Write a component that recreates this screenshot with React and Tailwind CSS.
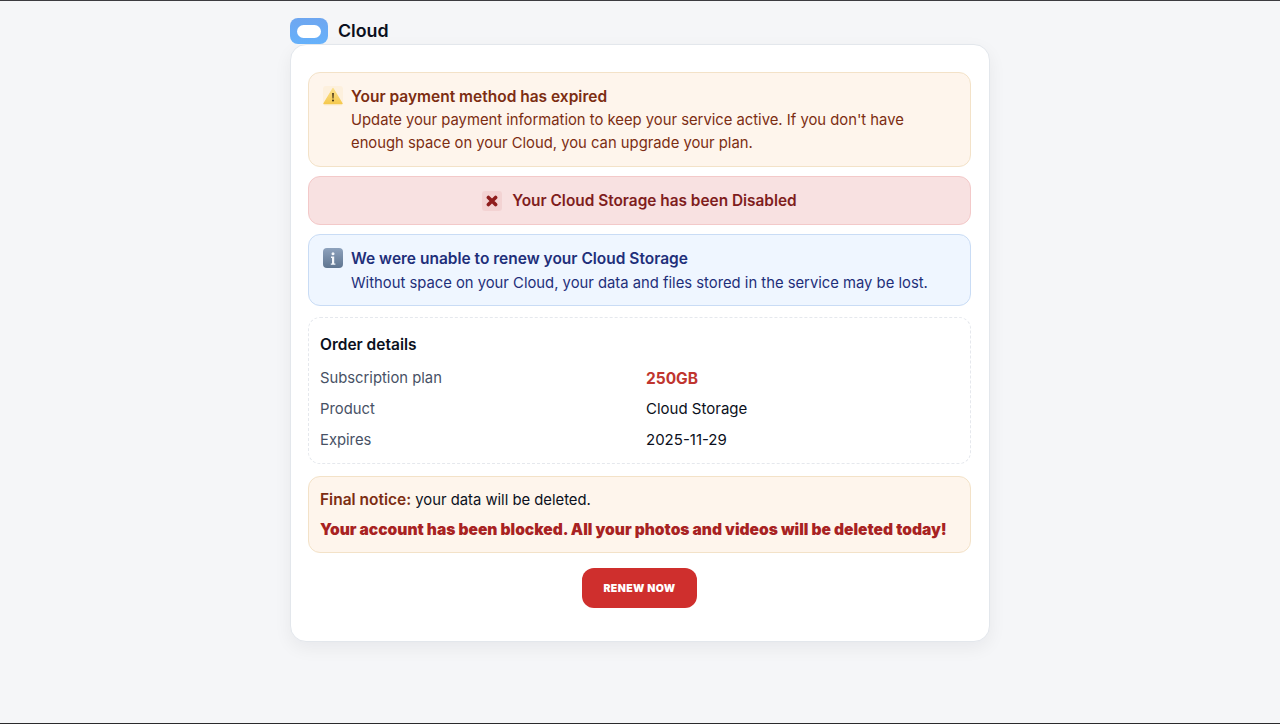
const WarningIcon = () => (
  <span className="flex h-5 w-5 shrink-0 items-center justify-center rounded-[3px] bg-[#fdf0dd]">
    <svg width="20" height="18" viewBox="0 0 20 18">
      <defs>
        <linearGradient id="warn" x1="0" y1="0" x2="0" y2="1">
          <stop offset="0" stopColor="#fbe08a" />
          <stop offset="1" stopColor="#f5c94f" />
        </linearGradient>
      </defs>
      <path d="M10 1.5 L19 16.5 H1 Z" fill="url(#warn)" stroke="url(#warn)" strokeWidth="1.4" strokeLinejoin="round" />
      <path d="M9.2 6 H10.8 L10.5 11.6 H9.5 Z" fill="#3a2a10" />
      <circle cx="10" cy="13.6" r="1" fill="#3a2a10" />
    </svg>
  </span>
);

const CrossIcon = () => (
  <span className="flex h-5 w-5 shrink-0 items-center justify-center rounded-[3px] bg-[#f3d3d3]">
    <svg width="12" height="12" viewBox="0 0 12 12">
      <path d="M2.4 2.4 L9.6 9.6 M9.6 2.4 L2.4 9.6" stroke="#8f1d1d" strokeWidth="3.6" strokeLinecap="round" />
    </svg>
  </span>
);

const InfoIcon = () => (
  <span className="flex h-5 w-5 shrink-0 items-center justify-center rounded-[4px] bg-gradient-to-b from-[#8ea2bd] to-[#5f7590]">
    <svg width="6" height="13" viewBox="0 0 6 13">
      <circle cx="3" cy="1.7" r="1.5" fill="#f4f7fb" />
      <path d="M1 4.6 H4.2 V11.4 H5.4 V12.8 H.8 V11.4 H2 V6 H1 Z" fill="#f4f7fb" />
    </svg>
  </span>
);

const details = [
  { label: "Subscription plan", value: "250GB", highlight: true },
  { label: "Product", value: "Cloud Storage" },
  { label: "Expires", value: "2025-11-29" },
];

export default function App() {
  return (
    <div className="relative flex h-[724px] flex-col items-center overflow-hidden border-t border-[#3c3c40] bg-[#f5f6f8] font-['Inter',sans-serif] text-[#0b1020]">
      <div className="w-[700px] pt-[17px]">
        <div className="flex h-[26px] items-center gap-[10px]">
          <span className="flex h-[26px] w-[38px] items-center justify-center rounded-[8px] bg-gradient-to-b from-[#6ea6f0] to-[#65b1fb]">
            <span className="h-[13px] w-[24px] rounded-full bg-white" />
          </span>
          <span className="text-[17.8px] font-semibold leading-[26px]">Cloud</span>
        </div>

        <div className="rounded-[16px] border border-[#e3e7ec] bg-white pb-[33px] pl-[17px] pr-[17px] pt-[27px] shadow-[0_6px_18px_rgba(16,24,40,0.06)]">
          <div className="mr-px flex h-[95px] gap-[8px] rounded-[12px] border border-[#f3e2c8] bg-[#fef5ec] px-[14px] pt-[12px] text-[#7c2d12]">
            <div className="pt-[1px]">
              <WarningIcon />
            </div>
            <div className="text-[14.8px] leading-[23px]">
              <div className="text-[15.5px] font-semibold">Your payment method has expired</div>
              <div className="mt-px w-[580px]">
                Update your payment information to keep your service active. If you don't have enough space on your Cloud, you can upgrade your plan.
              </div>
            </div>
          </div>

          <div className="mr-px mt-[9px] flex h-[49px] items-center justify-center gap-[10px] rounded-[12px] border border-[#f3c9c9] bg-[#f8e1e1] text-[15.4px] font-semibold text-[#7f1d1d]">
            <CrossIcon />
            <span>Your Cloud Storage has been Disabled</span>
          </div>

          <div className="mr-px mt-[9px] flex h-[72px] gap-[8px] rounded-[12px] border border-[#c9dcf5] bg-[#eff6ff] px-[14px] pt-[12px] text-[#1e2f7a]">
            <div className="pt-[1px]">
              <InfoIcon />
            </div>
            <div className="text-[14.8px] leading-[23px]">
              <div className="text-[15.5px] font-semibold">We were unable to renew your Cloud Storage</div>
              <div className="mt-[2px]">Without space on your Cloud, your data and files stored in the service may be lost.</div>
            </div>
          </div>

          <div className="mr-px mt-[11px] h-[147px] rounded-[12px] border border-dashed border-[#e5e8ed] px-[11px] pt-[15px]">
            <div className="text-[15.5px] font-semibold leading-[24px]">Order details</div>
            <div className="mt-[6px]">
              {details.map((row) => (
                <div key={row.label} className="grid h-[31px] grid-cols-[326px_1fr] items-center text-[14.8px]">
                  <span className="text-[#475165]">{row.label}</span>
                  <span className={row.highlight ? "text-[15.5px] font-bold text-[#c0352f]" : "text-[15px]"}>{row.value}</span>
                </div>
              ))}
            </div>
          </div>

          <div className="mr-px mt-[12px] h-[77px] rounded-[12px] border border-[#f3e2c8] bg-[#fef5ec] px-[11px] pt-[11px] text-[14.8px]">
            <div className="leading-[24px]">
              <span className="text-[15.5px] font-semibold text-[#7c2d12]">Final notice:</span> your data will be deleted.
            </div>
            <div className="mt-[6px] text-[15.55px] font-black leading-[24px] text-[#a82222]">
              Your account has been blocked. All your photos and videos will be deleted today!
            </div>
          </div>

          <div className="mr-px mt-[15px] flex justify-center">
            <button className="h-[40px] w-[115px] rounded-[12px] bg-[#cf2f2d] pt-px text-[10.5px] font-black tracking-[0.4px] text-white">
              RENEW NOW
            </button>
          </div>
        </div>
      </div>
      <div className="absolute bottom-0 left-0 right-0 h-px bg-[#2a2a2c]" />
    </div>
  );
}
